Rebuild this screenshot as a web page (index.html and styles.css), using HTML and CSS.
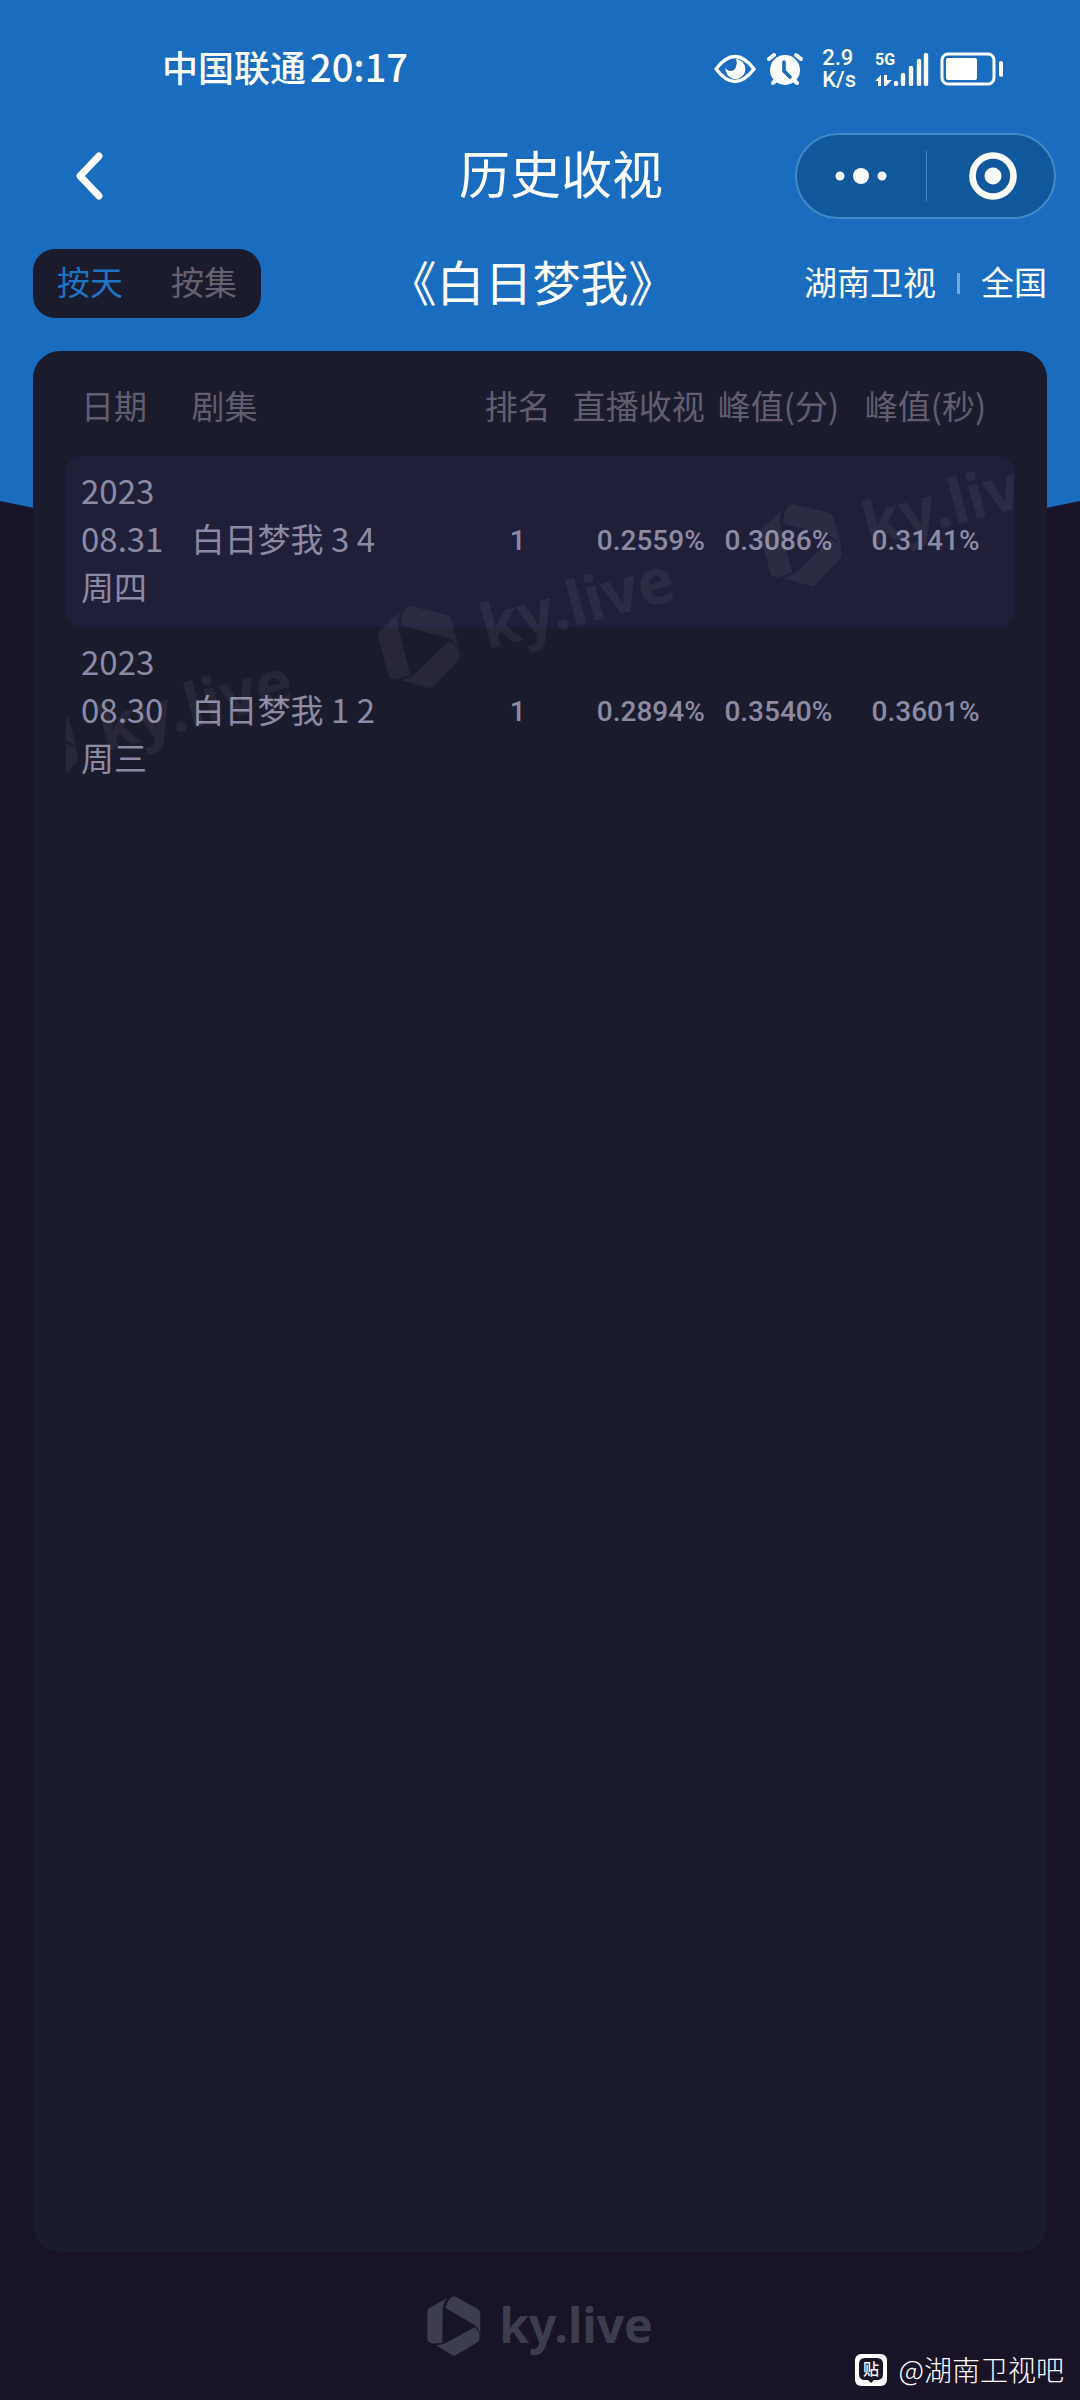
FILE: index.html
```html
<!DOCTYPE html>
<html lang="zh-CN">
<head>
    <meta charset="UTF-8" />
    <meta name="viewport" content="width=device-width, initial-scale=1.0"/>
    <title>历史收视</title>
    <link rel="stylesheet" href="styles.css">
</head>
<body>
    <!-- logo shape shared by the watermark and the footer -->
    <svg class="defs" aria-hidden="true">
        <symbol id="logo" viewBox="0 0 160 180">
            <path d="M0 48Q0 40 6 36L60 6Q46 22 46 44L45 140Q25 143 12 142Q2 140 0 130Z"/>
            <path d="M74 3Q80 -1 86 3L153 40Q159 44 159 52V114Q152 94 142 87L54 36Q60 12 74 3Z"/>
            <path d="M141 94Q155 104 157 116Q158 134 150 139L86 177Q80 181 74 177L25 147Q46 147 60 139Z"/>
        </symbol>
    </svg>

    <svg class="backdrop" viewBox="0 0 1080 560" preserveAspectRatio="none" aria-hidden="true">
        <path d="M0 0H1080V501Q540 615 0 501Z"/>
    </svg>

    <div class="statusbar">
        <div class="carrier">中国联通<span class="time">20:17</span></div>
        <div class="status-icons">
            <svg width="42" height="30" viewBox="0 0 42 30">
                <path d="M2 15Q21 -10 40 15Q21 40 2 15Z" fill="none" stroke="#fff" stroke-width="3.4" stroke-linejoin="round"/>
                <path d="M22 5a10 10 0 1 1-10.500 8.500a5.500 5.500 0 0 0 10.500-1a9 9 0 0 0 0-7.500z" fill="#fff"/>
            </svg>
            <svg width="36" height="34" viewBox="0 0 36 34">
                <circle cx="18" cy="18" r="15" fill="#fff"/>
                <path d="M2 7L7 3M34 7L29 3M6 31L9 28M30 31L27 28" stroke="#fff" stroke-width="4" stroke-linecap="round"/>
                <path d="M17 10V19L23 25" fill="none" stroke="#1a6dbe" stroke-width="3.600" stroke-linecap="round"/>
            </svg>
            <div class="speed">2.9<br>K/s</div>
            <div class="signal">
                <span class="net">5G</span>
                <svg width="54" height="34" viewBox="0 0 54 34">
                    <path d="M0 29L6 23V34H3V29ZM9 23H12V28H17L11 34H9Z" fill="#fff"/>
                    <path d="M21 31V32M28 23V32M36 16V32M44 9V32M51 3V32" stroke="#fff" stroke-width="4.400" stroke-linecap="round"/>
                </svg>
            </div>
            <svg class="battery" width="64" height="34" viewBox="0 0 64 34">
                <rect x="2" y="2" width="52" height="30" rx="6" fill="none" stroke="#fff" stroke-width="3"/>
                <rect x="6" y="6" width="31" height="22" rx="2" fill="#fff"/>
                <path d="M61 11V23" stroke="#fff" stroke-width="4" stroke-linecap="round"/>
            </svg>
        </div>
    </div>

    <header class="nav">
        <button class="back" aria-label="返回">
            <svg width="30" height="50" viewBox="0 0 30 50">
                <path d="M25 5L6 25L25 45" fill="none" stroke="#fff" stroke-width="7" stroke-linecap="round" stroke-linejoin="round"/>
            </svg>
        </button>
        <h1>历史收视</h1>
        <div class="capsule">
            <button aria-label="更多">
                <svg width="52" height="20" viewBox="0 0 52 20" fill="#fff">
                    <circle cx="5" cy="10" r="4.500"/>
                    <circle cx="26" cy="10" r="8"/>
                    <circle cx="47" cy="10" r="4.500"/>
                </svg>
            </button>
            <button aria-label="关闭">
                <svg width="48" height="48" viewBox="0 0 48 48">
                    <circle cx="24" cy="24" r="20.500" fill="none" stroke="#fff" stroke-width="6.600"/>
                    <circle cx="24" cy="24" r="8.500" fill="#fff"/>
                </svg>
            </button>
        </div>
    </header>

    <div class="toolbar">
        <div class="tabs">
            <button class="active">按天</button>
            <button>按集</button>
        </div>
        <h2>《白日梦我》</h2>
        <div class="filters">
            <button>湖南卫视</button>
            <span class="divider"></span>
            <button>全国</button>
        </div>
    </div>

    <main class="panel">
        <div class="table-wrap">
            <table>
                <colgroup>
                    <col class="c-date">
                    <col class="c-episode">
                    <col class="c-rank">
                    <col class="c-live">
                    <col class="c-minute">
                    <col class="c-second">
                </colgroup>
                <thead>
                    <tr>
                        <th>日期</th>
                        <th>剧集</th>
                        <th class="rank">排名</th>
                        <th class="live">直播收视</th>
                        <th class="peak">峰值(分)</th>
                        <th class="peak last">峰值(秒)</th>
                    </tr>
                </thead>
                <tbody>
                    <tr>
                        <td>2023<br>08.31<br>周四</td>
                        <td>白日梦我 3 4</td>
                        <td class="num rank">1</td>
                        <td class="num live">0.2559%</td>
                        <td class="num peak">0.3086%</td>
                        <td class="num peak last">0.3141%</td>
                    </tr>
                    <tr>
                        <td>2023<br>08.30<br>周三</td>
                        <td>白日梦我 1 2</td>
                        <td class="num rank">1</td>
                        <td class="num live">0.2894%</td>
                        <td class="num peak">0.3540%</td>
                        <td class="num peak last">0.3601%</td>
                    </tr>
                </tbody>
            </table>
            <svg class="watermark" viewBox="0 0 948 342" aria-hidden="true">
                <g transform="translate(736 89) rotate(-15)">
                    <use href="#logo" x="-38" y="-43" width="76" height="86"/>
                    <text x="64" y="20">ky.live</text>
                </g>
                <g transform="translate(354 191) rotate(-15)">
                    <use href="#logo" x="-38" y="-43" width="76" height="86"/>
                    <text x="64" y="20">ky.live</text>
                </g>
                <g transform="translate(-28 293) rotate(-15)">
                    <use href="#logo" x="-38" y="-43" width="76" height="86"/>
                    <text x="64" y="20">ky.live</text>
                </g>
            </svg>
        </div>
    </main>

    <footer class="footer">
        <svg width="54" height="60"><use href="#logo"/></svg>
        <span>ky.live</span>
    </footer>

    <div class="credit">
        <svg width="32" height="32" viewBox="0 0 32 32">
            <rect width="32" height="32" rx="6" fill="#fff"/>
            <path d="M10 4H22Q28 4 28 10V20Q28 26 22 26H19L16 29L13 26H10Q4 26 4 20V10Q4 4 10 4Z" fill="#181327"/>
            <text x="16" y="21">贴</text>
        </svg>
        <span>@湖南卫视吧</span>
    </div>
</body>
</html>
```
FILE: styles.css
```css
* {
    box-sizing: border-box;
}

body {
    position: relative;
    display: flex;
    flex-direction: column;
    min-height: 100vh;
    margin: 0;
    background-color: #181327;
    color: #fff;
    font-family: "Noto Sans CJK SC", sans-serif;
    font-size: 33px;
    line-height: 48px;
}

button {
    padding: 0;
    border: none;
    background: none;
    color: inherit;
    font: inherit;
    cursor: pointer;
}

svg {
    display: block;
}

.defs {
    position: absolute;
    width: 0;
    height: 0;
}

.backdrop {
    position: absolute;
    top: 0;
    left: 0;
    z-index: -1;
    width: 100%;
    height: 560px;
    fill: #1a6dbe;
}

/* status bar */
.statusbar {
    display: flex;
    justify-content: space-between;
    align-items: center;
    padding: 42px 76px 0 162px;
    height: 96px;
}

.carrier {
    padding-bottom: 6px;
    font-size: 36px;
    font-weight: 500;
}

.time {
    margin-left: 4px;
    font-size: 38px;
}

.status-icons {
    display: flex;
    align-items: center;
    gap: 11px;
}

.speed {
    margin: 0 8px;
    font-family: Roboto, sans-serif;
    font-size: 22px;
    font-weight: 500;
    line-height: 22px;
}

.signal {
    position: relative;
}

.net {
    position: absolute;
    top: -2px;
    left: 0;
    font-family: Roboto, sans-serif;
    font-size: 16px;
    font-weight: 700;
    line-height: 20px;
}

/* nav */
.nav {
    display: grid;
    grid-template-columns: 327px 1fr 261px;
    align-items: center;
    margin-top: 37px;
    padding-right: 24px;
}

.back {
    justify-self: start;
    margin-left: 60px;
    padding: 0 14px;
}

h1,
h2 {
    margin: 0;
    padding-bottom: 8px;
    font-weight: 400;
    line-height: 60px;
    text-align: center;
    white-space: nowrap;
}

h1 {
    font-size: 51px;
}

h2 {
    font-size: 48px;
}

.capsule {
    display: grid;
    grid-template-columns: 1fr 1fr;
    height: 86px;
    border: 2px solid #4189cb;
    border-radius: 43px;
    background-color: #10589b;
}

.capsule button {
    position: relative;
    display: flex;
    align-items: center;
    justify-content: center;
}

.capsule button + button {
    padding-left: 6px;
}

.capsule button + button::before {
    content: "";
    position: absolute;
    left: 0;
    top: 16px;
    bottom: 16px;
    width: 1px;
    background-color: #4189cb;
}

/* toolbar */
.toolbar {
    display: grid;
    grid-template-columns: 228px 1fr auto;
    align-items: center;
    margin: 30px 33px 0;
}

.tabs {
    display: flex;
    height: 69px;
    border-radius: 22px;
    background-color: #1b1b2e;
    color: #67626f;
}

.tabs button,
.filters button {
    flex: 1;
    padding-bottom: 6px;
    white-space: nowrap;
}

.tabs .active {
    color: #1f74c4;
}

.filters {
    display: flex;
    align-items: center;
}

.divider {
    width: 3px;
    height: 21px;
    margin: 0 21px;
    background-color: #76a9da;
}

/* ratings table */
.panel {
    flex: 1;
    margin: 33px 33px 0;
    padding: 0 33px;
    border-radius: 27px;
    background-color: #1b1b2e;
}

.table-wrap {
    position: relative;
    overflow: hidden;
}

table {
    width: 100%;
    table-layout: fixed;
    border-spacing: 0;
    color: #8d8aa3;
    white-space: nowrap;
}

.c-date { width: 12.4%; }
.c-episode { width: 30.4%; }
.c-rank { width: 9.7%; }
.c-live { width: 15.2%; }
.c-minute { width: 14.9%; }
.c-second { width: 17.4%; }

th {
    height: 105px;
    padding: 2px 0 0 8px;
    color: #625e70;
    font-weight: 400;
    text-align: left;
}

td {
    height: 171px;
    padding: 0 0 7px 8px;
}

th:first-child,
td:first-child {
    padding-left: 15px;
}

tbody tr:nth-child(odd) td {
    background-color: #201f3a;
}

td:first-child {
    border-radius: 16px 0 0 16px;
}

td:last-child {
    border-radius: 0 16px 16px 0;
}

.num {
    padding-bottom: 2px;
    font-family: Roboto, sans-serif;
    font-size: 28px;
    font-weight: 500;
}

.rank,
.peak {
    padding-left: 0;
    text-align: center;
}

.live {
    padding-left: 0;
    padding-right: 3px;
    text-align: right;
}

.last {
    padding-right: 12px;
}

.watermark {
    position: absolute;
    left: 0;
    bottom: 0;
    width: 100%;
    fill: #fff;
    opacity: 0.05;
    pointer-events: none;
}

.watermark text {
    font-family: "Noto Sans", sans-serif;
    font-size: 62px;
    font-weight: 700;
}

/* footer */
.footer {
    display: flex;
    align-items: center;
    justify-content: center;
    gap: 18px;
    height: 148px;
    color: #3c3e4d;
    fill: #3c3e4d;
    font-family: "Noto Sans", sans-serif;
    font-size: 48px;
    font-weight: 700;
}

.footer span {
    padding-bottom: 2px;
}

.credit {
    position: absolute;
    right: 16px;
    bottom: 9px;
    display: flex;
    align-items: center;
    gap: 12px;
    font-size: 28px;
    font-weight: 300;
    line-height: 40px;
}

.credit span {
    padding-bottom: 2px;
}

.credit text {
    fill: #fff;
    font-size: 16px;
    font-weight: 500;
    text-anchor: middle;
}
```
